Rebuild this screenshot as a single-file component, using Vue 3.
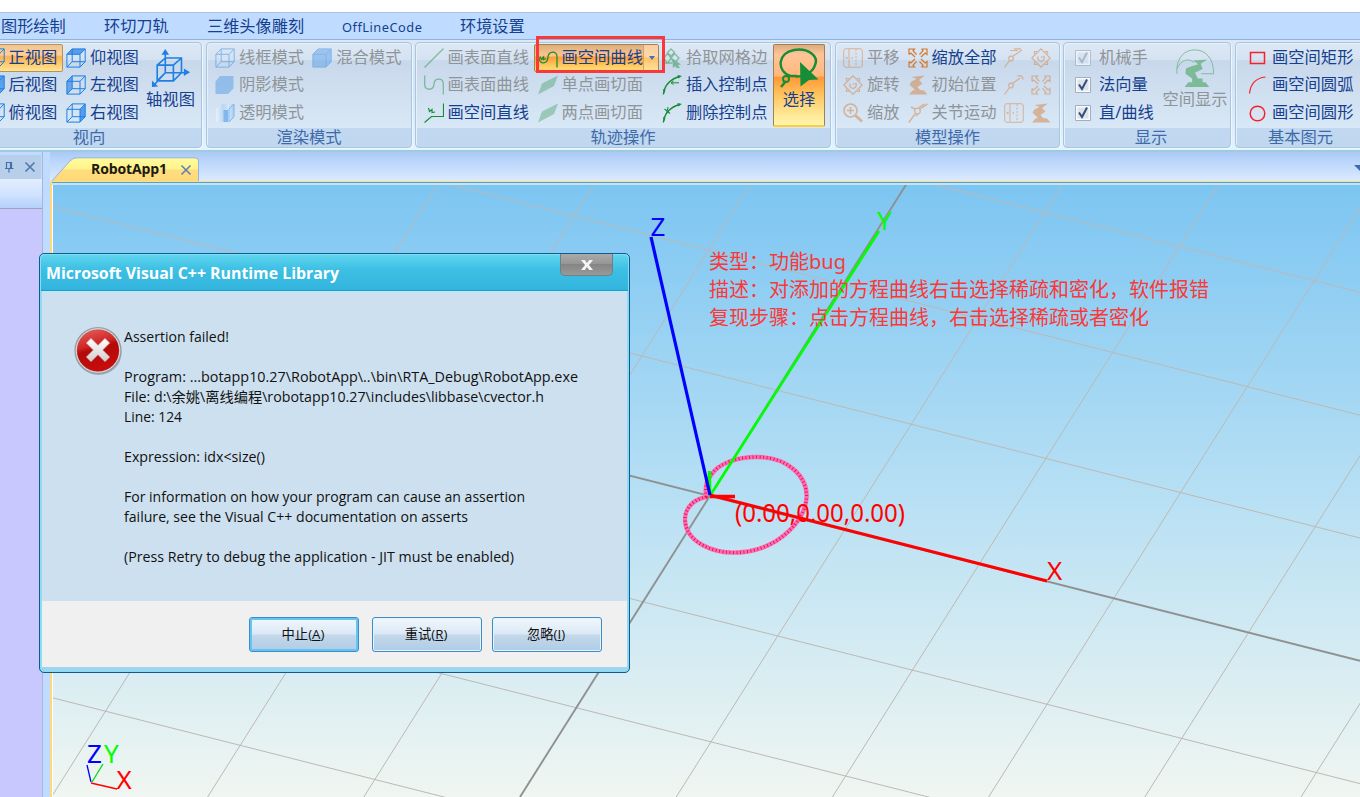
<script setup>
const tabs = [
  { label: '图形绘制', w: 103 },
  { label: '环切刀轨', w: 103 },
  { label: '三维头像雕刻', w: 135 },
  { label: 'OffLineCode', w: 118, latin: true },
  { label: '环境设置', w: 80 }
]

const groups = [
  {
    name: '视向', cls: 'g-view',
    cols: [
      { w: 81.5, items: [
        { t: '正视图', i: 'cube', c: 'blue', hot: true },
        { t: '后视图', i: 'cube-front', c: 'blue' },
        { t: '俯视图', i: 'cube', c: 'blue' }
      ] },
      { w: 78, items: [
        { t: '仰视图', i: 'cube-top', c: 'blue' },
        { t: '左视图', i: 'cube-left', c: 'blue' },
        { t: '右视图', i: 'cube-right', c: 'blue' }
      ] }
    ],
    big: { t: '轴视图', i: 'axes', c: 'blue', cls: 'big-axes' }
  },
  {
    name: '渲染模式', cls: 'g-render',
    cols: [
      { w: 97.3, items: [
        { t: '线框模式', i: 'cube', c: 'blue', off: true },
        { t: '阴影模式', i: 'cube-shade', c: 'blue', off: true },
        { t: '透明模式', i: 'cube-glass', c: 'blue', off: true }
      ] },
      { w: 90, items: [{ t: '混合模式', i: 'cube-solid', c: 'blue', off: true }] }
    ]
  },
  {
    name: '轨迹操作', cls: 'g-track',
    cols: [
      { w: 114, items: [
        { t: '画表面直线', i: 'line', c: 'green', off: true },
        { t: '画表面曲线', i: 'curve', c: 'green', off: true },
        { t: '画空间直线', i: 'space-line', c: 'green' }
      ] },
      { w: 124.5, items: [
        { t: '画空间曲线', i: 'space-curve', c: 'green', split: true },
        { t: '单点画切面', i: 'plane', c: 'green', off: true },
        { t: '两点画切面', i: 'plane', c: 'green', off: true }
      ] },
      { w: 111, items: [
        { t: '拾取网格边', i: 'mesh', c: 'green', off: true },
        { t: '插入控制点', i: 'arc-in', c: 'green' },
        { t: '删除控制点', i: 'arc-del', c: 'green' }
      ] }
    ],
    big: { t: '选择', i: 'lasso', c: 'green', cls: 'big-select' }
  },
  {
    name: '模型操作', cls: 'g-model',
    cols: [
      { w: 64.5, items: [
        { t: '平移', i: 'pan', c: 'orange', off: true },
        { t: '旋转', i: 'rotate', c: 'orange', off: true },
        { t: '缩放', i: 'zoom', c: 'orange', off: true }
      ] },
      { w: 96.5, items: [
        { t: '缩放全部', i: 'expand', c: 'orange' },
        { t: '初始位置', i: 'robot', c: 'orange', off: true },
        { t: '关节运动', i: 'joint', c: 'orange', off: true }
      ] },
      { w: 27, items: [
        { t: '', i: 'joint-z', c: 'orange', off: true },
        { t: '', i: 'joint-r', c: 'orange', off: true },
        { t: '', i: 'pan', c: 'orange', off: true }
      ] },
      { w: 24, items: [
        { t: '', i: 'rotate', c: 'orange', off: true },
        { t: '', i: 'expand', c: 'orange', off: true },
        { t: '', i: 'robot', c: 'orange', off: true }
      ] }
    ]
  },
  {
    name: '显示', cls: 'g-show',
    cols: [
      { w: 85, items: [
        { t: '机械手', i: 'check', c: 'check', off: true },
        { t: '法向量', i: 'check', c: 'check' },
        { t: '直/曲线', i: 'check', c: 'check' }
      ] }
    ],
    big: { t: '空间显示', i: 'space', c: 'green', cls: 'big-space', off: true }
  },
  {
    name: '基本图元', cls: 'g-prim',
    cols: [
      { w: 112, items: [
        { t: '画空间矩形', i: 'rect', c: 'red' },
        { t: '画空间圆弧', i: 'arc', c: 'red' },
        { t: '画空间圆形', i: 'circle', c: 'red' }
      ] }
    ]
  }
]

const steep = [-3, -2, -1, 1, 2, 3, 4, 5, 6, 7, 8, 9].map(k => ({
  x1: 520 + 156.2 * k, y1: 797, x2: 906.5 + 156.2 * k, y2: 184
}))
const shallow = [-3, -2, -1, 1, 2, 3].map(k => ({
  x1: 40, y1: 326.2 + 122.8 * k, x2: 1360, y2: 660.8 + 122.8 * k
}))

const message = [
  { t: 'Assertion failed!', w: 105 },
  { t: '' },
  { t: 'Program: ...botapp10.27\\RobotApp\\..\\bin\\RTA_Debug\\RobotApp.exe', w: 454 },
  { t: 'File: d:\\余姚\\离线编程\\robotapp10.27\\includes\\libbase\\cvector.h', w: 420 },
  { t: 'Line: 124', w: 58 },
  { t: '' },
  { t: 'Expression: idx<size()', w: 141 },
  { t: '' },
  { t: 'For information on how your program can cause an assertion', w: 401 },
  { t: 'failure, see the Visual C++ documentation on asserts', w: 344 },
  { t: '' },
  { t: '(Press Retry to debug the application - JIT must be enabled)', w: 390 }
]
const buttons = [
  { t: '中止', k: 'A', focus: true },
  { t: '重试', k: 'R' },
  { t: '忽略', k: 'I' }
]
</script>

<template>
  <div class="app">
    <svg class="defs" width="0" height="0">
      <defs>
        <linearGradient id="glass" x1="0" x2="1"><stop offset="0" stop-color="#fff" /><stop offset=".4" stop-color="#9cc8f8" /><stop offset=".7" stop-color="#d8eaff" /><stop offset="1" stop-color="#6eb0f4" /></linearGradient>
      </defs>
      <symbol id="cube" viewBox="0 0 20 20"><path d="M.9 6.3H14v12.8H.9zM6.2.9H19.2V13.7H6.2zM.9 6.3 6.2.9M14 6.3 19.2.9M14 19.1l5.2-5.4M.9 19.1l5.3-5.4" fill="none" stroke="currentColor" stroke-width="1" /></symbol>
      <symbol id="cube-front" viewBox="0 0 20 20"><path d="M6.2.9H19.2V13.7L14 19.1V6.3H1z" fill="currentColor" opacity=".65" /><use href="#cube" width="20" height="20" /></symbol>
      <symbol id="cube-top" viewBox="0 0 20 20"><path d="M.9 6.3 6.2.9h13L14 6.3z" fill="currentColor" opacity=".7" /><use href="#cube" width="20" height="20" /></symbol>
      <symbol id="cube-left" viewBox="0 0 20 20"><path d="M.9 6.3 6.2.9v12.8L.9 19.1z" fill="currentColor" opacity=".6" /><use href="#cube" width="20" height="20" /></symbol>
      <symbol id="cube-right" viewBox="0 0 20 20"><path d="M14 6.3 19.2.9v12.8L14 19.1z" fill="currentColor" opacity=".7" /><use href="#cube" width="20" height="20" /></symbol>
      <symbol id="cube-shade" viewBox="0 0 20 20"><path d="M.5 6.5 5 1h13.500v12.500L13 19H.5z" fill="currentColor" opacity=".75" /></symbol>
      <symbol id="cube-solid" viewBox="0 0 20 20"><path d="M.9 6.3 6.2.9h13v12.8L14 19.1H.9z" fill="currentColor" opacity=".7" /><path d="M.9 6.300H14v12.800H.9zM.9 6.300 6.200.9h13v12.800L14 19.100M14 6.300 19.200.9" fill="none" stroke="currentColor" /></symbol>
      <symbol id="cube-glass" viewBox="0 0 20 20"><path d="M1 6 6 1h13v13l-5 5H1z" fill="url(#glass)" /><path d="M14 6l5-5v13l-5 5z" fill="none" stroke="currentColor" /><path d="M8.500 7h4.500v12H8.500z" fill="currentColor" /></symbol>
      <symbol id="axes" viewBox="0 0 40 42"><path d="M5.500 18H22.500V34.500H5.500zM14 10.500h17V26H14zM5.500 18 14 10.500M22.500 18 31 10.500M22.500 34.500 31 26M5.500 34.500 14 26M14 26V4M14 26h21M14 26 3 38" fill="none" stroke="currentColor" stroke-width="1.700" /><path d="M14 1l4 6H10zM40 25.500l-6.500-4v8zM0 41v-7l6.500 6.500z" fill="currentColor" /></symbol>
      <symbol id="line" viewBox="0 0 20 20"><path d="M.5 19.500 19.500.5" stroke="currentColor" stroke-width="1.300" /></symbol>
      <symbol id="curve" viewBox="0 0 20 20"><path d="M.7.5V9c0 7 8.800 7 9.300 0C10.500 2.500 19.300 2.500 19.300 9v10.500" fill="none" stroke="currentColor" stroke-width="1.300" /></symbol>
      <symbol id="space-line" viewBox="0 0 20 20"><path d="M.5 19.500 7.500 13.500h12V.5M4.500 5l1 3.500L8 6.500v3l3-.5" fill="none" stroke="currentColor" stroke-width="1.200" /></symbol>
      <symbol id="space-curve" viewBox="0 0 20 20"><path d="M1 9.500c0 7 8.500 7.500 9-.5C10.500 2.500 19 2.500 19 8.500v11M2 8.500l1.500 3L5.500 9v2.500L8 10.500" fill="none" stroke="currentColor" stroke-width="1.300" /></symbol>
      <symbol id="plane" viewBox="0 0 20 20"><path d="M0 19.500 4 8.500 20 .5 16 11z" fill="currentColor" opacity=".7" /></symbol>
      <symbol id="mesh" viewBox="0 0 20 20"><path d="M9 1 5.500 4.500 9 8l3.500-3.500zM5.500 5.500 2 10l3.500 5L9 10zM12.500 5.500 9 10l3.500 5L17 10zM2 10.500 1 15h9" fill="none" stroke="currentColor" stroke-width="1.300" /><path d="m10 10 9 6.500-3 .5 2 3-3 1-1.500-3L11 20z" fill="currentColor" /></symbol>
      <symbol id="arc-in" viewBox="0 0 20 20"><path d="M1.300 19.500C2.500 10.500 8 4 18 1.500" fill="none" stroke="currentColor" stroke-width="1.300" /><path d="M9 7.800h8M9 7.800l2.500-1.800M9 7.800l2.500 1.800" fill="none" stroke="currentColor" stroke-width="1" /><path d="M15.500 0l4.500 1-4 2.500zM1 14l2.500 1-1.500 4z" fill="currentColor" /></symbol>
      <symbol id="arc-del" viewBox="0 0 20 20"><path d="M1.300 19.500C2.500 10.500 8 4 18 1.500" fill="none" stroke="currentColor" stroke-width="1.300" /><path d="M2.500 6l5.500 4.500M6 4l-1.500 7" fill="none" stroke="currentColor" stroke-width="1.100" /><path d="M15.500 0l4.500 1-4 2.500zM1 14l2.500 1-1.500 4z" fill="currentColor" /></symbol>
      <symbol id="lasso" viewBox="0 0 40 40"><path d="M11 28C-3 22-1 5 15 2c14-2.500 25 6 21 15-2 7-10 12-19 11.500" fill="none" stroke="currentColor" stroke-width="2.500" /><circle cx="7" cy="31" r="3" fill="none" stroke="currentColor" stroke-width="2" /><path d="M9 28h9M7 33l-5 6" stroke="currentColor" stroke-width="2.500" /><path d="M21 14 39.500 31.500 30 32l-8.500 6.500z" fill="currentColor" /></symbol>
      <symbol id="pan" viewBox="0 0 20 20"><path d="M3 .7h14q2.300 0 2.300 2.300v14q0 2.300-2.300 2.300H3Q.7 19.300.7 17V3Q.7.7 3 .7zM6 1v18" fill="none" stroke="currentColor" stroke-width="1" /><path d="M13 1v18" stroke="currentColor" stroke-dasharray="2 1.500" /><path d="M2 10l2.500-1.500v3zM8.500 9.300h1.500v1.500H8.500z" fill="currentColor" /></symbol>
      <symbol id="rotate" viewBox="0 0 20 20"><path d="M10 .8 19.200 10 10 19.200.8 10zM3.500 6V3.500H6M14 3.500h2.500V6M16.500 14v2.500H14M6 16.500H3.500V14" fill="none" stroke="currentColor" stroke-width="1.200" /><path d="M7.200 8.500A3.200 3.200 0 1 0 12.500 8M10 9.500l1.500-1" fill="none" stroke="currentColor" stroke-width="1.200" /></symbol>
      <symbol id="zoom" viewBox="0 0 20 20"><circle cx="7.500" cy="7.500" r="6.500" fill="none" stroke="currentColor" stroke-width="1.600" /><path d="M4 7.500h7M7.500 4v7" stroke="currentColor" stroke-width="1.600" /><path d="m12.500 12.500 6.500 6" stroke="currentColor" stroke-width="3" /></symbol>
      <symbol id="expand" viewBox="0 0 20 20"><path d="M1 6.500V1h5.500L5 2.800 8.500 6.500M1 6.500 2.800 5 7 9M13.500 1H19v5.500L17.200 5 13 9M13.500 1 15 2.800 11.500 6.500M1 13.500V19h5.500L5 17.200l3.500-3.700M1 13.500 2.800 15 7 11M13.500 19H19v-5.500L17.200 15 13 11M13.500 19l1.500-1.800-3.500-3.700" fill="none" stroke="currentColor" stroke-width="1.200" /></symbol>
      <symbol id="robot" viewBox="0 0 20 20"><path d="M3.500 2 17 .5 11 5 14.500 8.500 9.500 12l2.500 3 4 .5 3.500 4H1L4.500 15.500 7 15 1.500 9.500 3.500 6.500 8.500 4z" fill="currentColor" /></symbol>
      <symbol id="joint" viewBox="0 0 20 20"><circle cx="9.500" cy="8" r="2.800" fill="none" stroke="currentColor" stroke-width="1.200" /><path d="M12 6 19.500.8M11 4.500 16.500.8M7.500 10.500.8 19.500M10 11l-2 2M7 6 3 4" stroke="currentColor" stroke-width="1.400" /></symbol>
      <symbol id="joint-z" viewBox="0 0 20 20"><circle cx="7" cy="10.500" r="2.300" fill="none" stroke="currentColor" stroke-width="1.200" /><path d="M8.500 8.500 18 2M5.500 12.500.5 19.500M6 2.500h8M10 .8h7" fill="none" stroke="currentColor" stroke-width="1.200" /></symbol>
      <symbol id="joint-r" viewBox="0 0 20 20"><circle cx="7" cy="10.500" r="2.300" fill="none" stroke="currentColor" stroke-width="1.200" /><path d="M8.500 8.500 16 3M5.500 12.500.5 19.500M13.500 1c3-1 5.500 0 5.500 3.500" fill="none" stroke="currentColor" stroke-width="1.200" /></symbol>
      <symbol id="check" viewBox="0 0 20 20"><path d="M2.500 2.500h15v15h-15z" fill="#f8fafc" stroke="#9fb0c4" stroke-width="1" /><path d="M4.500 4.500h11v11h-11z" fill="#dce3ec" /><path d="M6 9.500 9 14l5-9.500" fill="none" stroke="currentColor" stroke-width="2" /></symbol>
      <symbol id="space" viewBox="0 0 40 42"><path d="M1 27C0 10 9 2 20 2s20 9 19.500 25H26.500M1 22c4-9 11-12 18-7" fill="none" stroke="currentColor" stroke-width="1" /><path d="M18 13 33 12l-7 4.500 2 5.500-8 4 3 6h5v4h3l4 5H9l4-5h4v-4l-7-5 .5-5.500 5-2 8-2.500z" fill="currentColor" /></symbol>
      <symbol id="rect" viewBox="0 0 20 20"><path d="M2.500 4.500h14v11h-14z" fill="none" stroke="currentColor" stroke-width="1.500" /></symbol>
      <symbol id="arc" viewBox="0 0 20 20"><path d="M1.500 18.500C2.500 9 8 3 17.500 2" fill="none" stroke="currentColor" stroke-width="1.200" /></symbol>
      <symbol id="circle" viewBox="0 0 20 20"><circle cx="9.500" cy="10.500" r="7.300" fill="none" stroke="currentColor" stroke-width="1.500" /></symbol>
    </svg>

    <nav class="tabs">
      <span v-for="t in tabs" :key="t.label" :class="{ latin: t.latin }" :style="{ width: t.w + 'px' }">{{ t.label }}</span>
    </nav>

    <section class="ribbon">
      <div v-for="g in groups" :key="g.name" class="group" :class="g.cls">
        <div class="content">
          <div v-for="(c, ci) in g.cols" :key="ci" class="col" :style="{ width: c.w + 'px' }">
            <div v-for="(it, ii) in c.items" :key="ii" class="item" :class="{ off: it.off, hot: it.hot, split: it.split }">
              <svg class="ico" :class="it.c"><use :href="'#' + it.i" /></svg>
              <span>{{ it.t }}</span>
              <i v-if="it.split" class="drop"></i>
            </div>
          </div>
          <div v-if="g.big" class="big" :class="[g.big.cls, { off: g.big.off }]">
            <svg class="bigico" :class="g.big.c"><use :href="'#' + g.big.i" /></svg>
            <span>{{ g.big.t }}</span>
          </div>
        </div>
        <div class="caption">{{ g.name }}</div>
      </div>
    </section>
    <div class="callout"></div>

    <main class="work">
      <aside class="side">
        <header>
          <svg width="40" height="14" viewBox="0 0 40 14"><path d="M6.500 8V2.500h5V8M10.500 2.500V8M5 8.500h8.500M9 8.500v4" fill="none" stroke="#4a6ea9" stroke-width="1.200" /><path d="m25.500 2.500 9 9m0-9-9 9" stroke="#5177b0" stroke-width="1.600" /></svg>
        </header>
        <div class="side-tool"></div>
        <div class="side-body"></div>
      </aside>
      <div class="doc">
        <div class="doctabs">
          <div class="doctab">
            <svg class="tabshape" width="150" height="25" viewBox="0 0 150 25">
              <defs><linearGradient id="tabg" x1="0" y1="0" x2="0" y2="1"><stop offset="0" stop-color="#fffba0" /><stop offset=".45" stop-color="#fff48a" /><stop offset=".5" stop-color="#ffdd80" /><stop offset="1" stop-color="#ffd877" /></linearGradient></defs>
              <path d="M1 25 20 4Q23 .8 27 .8H145Q148.500.8 148.500 4V25z" fill="url(#tabg)" stroke="#93b4dc" />
            </svg>
            <b>RobotApp1</b>
            <svg class="tabx" width="12" height="12" viewBox="0 0 12 12"><path d="m1.500 1.500 9 9m0-9-9 9" stroke="#5b7db3" stroke-width="1.500" /></svg>
          </div>
          <i class="tabmenu"></i>
        </div>
        <div class="view">
          <svg class="scene" viewBox="53 185 1307 612" preserveAspectRatio="none">
            <g stroke="#bdb8b4" stroke-width="1" fill="none">
              <line v-for="(l, i) in steep" :key="'s' + i" v-bind="l" />
              <line v-for="(l, i) in shallow" :key="'h' + i" v-bind="l" />
            </g>
            <g stroke="#8f9190" stroke-width="1.900">
              <line x1="40" y1="326.200" x2="1360" y2="660.800" />
              <line x1="520" y1="797" x2="906.500" y2="184" />
            </g>
            <g fill="none">
              <path d="M706 497C705 489 706 481 711 475C719 463 737 457 757 457C787 457 808 476 806.500 498C805 520 781 546 748 551.500C713 557 685 541 685 519C685 508 694 499 706 497z" stroke="#ff69b4" stroke-width="4.400" />
              <path d="M706 497C705 489 706 481 711 475C719 463 737 457 757 457C787 457 808 476 806.500 498C805 520 781 546 748 551.500C713 557 685 541 685 519C685 508 694 499 706 497z" stroke="#e01840" stroke-width="3.200" stroke-dasharray=".9 2.600" />
              <path d="M710.500 495 879 231" stroke="#0f0" stroke-width="2.700" />
              <path d="M709.500 471V492" stroke="#0f0" stroke-width="3.500" />
              <path d="M710 495 1047 581" stroke="#f00" stroke-width="3" />
              <path d="M710 496.500h25" stroke="#f00" stroke-width="3.500" />
              <path d="M651 237 710 495" stroke="#00f" stroke-width="3.200" />
            </g>
            <g class="axis">
              <text x="650.500" y="236" fill="#00f">Z</text>
              <text x="877" y="230" fill="#0f0">Y</text>
              <text x="1047" y="580" fill="#f00">X</text>
              <text x="735" y="521.500" fill="#f00" textLength="170" lengthAdjust="spacingAndGlyphs">(0.00,0.00,0.00)</text>
            </g>
            <g fill="none" stroke-width="1.300">
              <path d="M91 782 87 765" stroke="#00f" /><path d="m92 782 11-18" stroke="#0d0" /><path d="m91 783 26 6" stroke="#f00" />
            </g>
            <g class="mini">
              <text x="87" y="763" fill="#00f">Z</text>
              <text x="104" y="763" fill="#0f0">Y</text>
              <text x="116.500" y="789" fill="#f00">X</text>
            </g>
          </svg>
          <div class="note">
            <p>类型：功能bug</p>
            <p>描述：对添加的方程曲线右击选择稀疏和密化，软件报错</p>
            <p>复现步骤：点击方程曲线，右击选择稀疏或者密化</p>
          </div>
        </div>
      </div>
    </main>

    <div class="dialog">
      <div class="title">
        <svg width="300" height="24"><text x="0" y="17" textLength="293" lengthAdjust="spacingAndGlyphs">Microsoft Visual C++ Runtime Library</text></svg>
        <button class="close"><svg width="12" height="10" viewBox="0 0 12 10"><path d="M0 0h3.800L6 3 8.200 0H12L8 5l4 5H8.200L6 7l-2.200 3H0l4-5z" fill="#f4f4f4" /></svg></button>
      </div>
      <div class="body">
        <svg class="err" width="48" height="50" viewBox="0 0 48 50">
          <defs>
            <linearGradient id="errg" x1="0" y1="0" x2=".3" y2="1"><stop offset="0" stop-color="#ea6a62" /><stop offset=".45" stop-color="#cf2525" /><stop offset=".55" stop-color="#b30a0a" /><stop offset="1" stop-color="#c80c0c" /></linearGradient>
            <linearGradient id="xg" x1="0" y1="0" x2="0" y2="1"><stop offset="0" stop-color="#fff" /><stop offset="1" stop-color="#cfcfcf" /></linearGradient>
          </defs>
          <ellipse cx="24.500" cy="27" rx="23" ry="22" fill="#55677a" opacity=".4" />
          <circle cx="24" cy="24.500" r="22.300" fill="url(#errg)" stroke="#9b9da3" stroke-width="2.600" />
          <circle cx="24" cy="24.500" r="21.800" fill="none" stroke="#e3d9da" stroke-width="1" />
          <path d="m12.500 17 4.500-4.500 7 7 7-7 4.500 4.500-7 7 7 7-4.500 4.500-7-7-7 7-4.500-4.500 7-7z" fill="url(#xg)" stroke="#d9d2d2" stroke-width=".8" />
        </svg>
        <div class="msg">
          <div v-for="(m, i) in message" :key="i" class="ml">
            <svg v-if="m.t" width="470" height="20"><text x="0" y="14.500" :textLength="m.w" lengthAdjust="spacingAndGlyphs">{{ m.t }}</text></svg>
          </div>
        </div>
      </div>
      <div class="foot">
        <button v-for="b in buttons" :key="b.k" class="btn" :class="{ focus: b.focus }">{{ b.t }}(<u>{{ b.k }}</u>)</button>
      </div>
    </div>
  </div>
</template>

<style>
html, body { margin: 0; overflow: hidden; }
</style>

<style scoped>
.app { position: relative; box-sizing: border-box; width: 1360px; height: 797px; padding-top: 12px; overflow: hidden; background: #fff; display: flex; flex-direction: column; font-family: "Noto Sans", "Noto Sans CJK SC", sans-serif; color: #153f8f; }
.defs { position: absolute; }
.tabs { flex: none; display: flex; height: 27px; background: #bfdbff; border-top: 1px solid #a3c2ec; box-sizing: border-box; padding-left: 1px; font-size: 16.200px; line-height: 26px; white-space: nowrap; }
.tabs span { flex: none; }
.tabs .latin { font-size: 12.800px; letter-spacing: .5px; line-height: 28px; }
.ribbon { flex: none; box-sizing: border-box; height: 113px; display: flex; gap: 3px; padding: 2px 0 0; background: linear-gradient(#dce8f5 0, #d4e4f4 40%, #e3f2ff 100%); border-top: 1px solid #8fb2de; border-bottom: 2px solid #9dcbe4; }
.group { flex: none; box-sizing: border-box; height: 106px; border: 1px solid #a9c5df; border-radius: 4px; box-shadow: inset 1px 1px 0 #e6f0fa, 1px 1px 0 #eef6fe; background: linear-gradient(#dde8f5 0, #d5e2f1 16%, #c8d8eb 17%, #d9e8f6 82%, #c1d8f0 82%, #bfd7ef 100%); overflow: hidden; }
.content { display: flex; height: 85px; padding-top: 1px; box-sizing: border-box; }
.caption { height: 19px; line-height: 18px; text-align: center; font-size: 16.300px; color: #3e6aaa; }
.g-view { width: 223px; margin-left: -21px; }
.g-view .content { padding-left: 4.500px; }
.g-view .caption { margin-left: -3px; }
.g-render { width: 206px; margin-left: 1px; }
.g-render .content { padding-left: 8px; }
.g-track { width: 416px; }
.g-track .content { padding-left: 7.500px; }
.g-model { width: 225px; margin-left: 1px; }
.g-model .content { padding-left: 7px; }
.g-show { width: 168px; }
.g-show .content { padding-left: 9px; }
.g-show .caption { margin-left: 8px; }
.g-prim { width: 142px; margin-left: 1px; }
.g-prim .content { padding-left: 12px; }
.g-prim .caption { margin-left: -11px; }
.col { flex: none; }
.item { display: flex; align-items: center; height: 27.500px; font-size: 16.300px; line-height: 27px; white-space: nowrap; box-sizing: border-box; }
.item span { margin-left: 4px; position: relative; top: -.5px; }
.ico { flex: none; width: 20px; height: 20px; }
.g-show .item span { margin-left: 6px; }
.blue { color: #1f7fe5; }
.green { color: #178d38; }
.orange { color: #d5772c; }
.red { color: #f8202c; }
.check { color: #354f78; }
.off { color: #8f9499; }
.off .ico { opacity: .45; }
.off .check { opacity: .7; color: #8fa9c4; }
.hot { margin-left: -3px; width: 81px; padding-left: 3px; border: 1px solid #b09468; border-left: 0; border-radius: 2px; background: linear-gradient(#efc58f, #ffd09b 38%, #fdb150 45%, #ffe48f); }
.split { margin-left: -4px; width: 125px; padding-left: 3px; border: 1px solid #a5814d; border-radius: 2px; background: linear-gradient(#dcae7c, #fdc58d 40%, #ff9f38 48%, #ffd76d 90%); }
.drop { align-self: stretch; border-left: 1px solid #d4a469; display: flex; align-items: center; padding-left: 5px; background: linear-gradient(#f5cfa0, #ffd9a8 45%, #ffc168 50%, #ffe59a); flex: 1; }
.drop::after { content: ''; border: 3.500px solid transparent; border-top: 4.500px solid #3e72bb; border-bottom: 0; }
.big { flex: none; display: flex; flex-direction: column; align-items: center; font-size: 16.300px; line-height: 22px; white-space: nowrap; box-sizing: border-box; }
.bigico { width: 40px; height: 40px; }
.big-axes { width: 53px; padding-top: 4px; }
.big-select { width: 52px; height: 83px; padding-top: 3px; border: 1px solid #a3804a; border-bottom: 2px solid #ffcd37; background: linear-gradient(#d9ad82 0, #ffc597 12%, #ffb77c 39%, #ff9635 40%, #ffc45d 62%, #ffec9d 90%, #fff3ac); border-radius: 2px; }
.big-space { width: 74px; padding-top: 4px; }
.big-space .green { color: #7dbb98; }
.callout { position: absolute; left: 536px; top: 36px; width: 129px; height: 37px; box-sizing: border-box; border: 3px solid #fb3838; }

.work { flex: 1; display: flex; background: #bfdbff; min-height: 0; }
.side { flex: none; width: 43px; box-sizing: border-box; border-right: 1px solid #a9b7cf; display: flex; flex-direction: column; padding-top: 3px; }
.side header { height: 24px; width: 41px; background: #b7cfe8; display: flex; align-items: center; }
.side-tool { height: 29px; background: linear-gradient(#e2edff, #cfe2ff 55%, #b4d1fb); border-bottom: 1px solid #9aa5bd; }
.side-body { flex: 1; background: #c8c8ff; }
.doc { flex: 1; margin-left: 7px; display: flex; flex-direction: column; min-width: 0; }
.doctabs { flex: none; height: 29px; background: linear-gradient(#abc9f3, #bad5fb 30%, #dceaff); display: flex; justify-content: space-between; align-items: flex-end; }
.doctab { position: relative; width: 150px; height: 24px; display: flex; align-items: center; }
.tabshape { position: absolute; left: 0; top: 0; }
.doctab b { position: relative; top: -.5px; font: bold 14px/22px "Open Sans", sans-serif; color: #1a1a10; margin-left: 41px; width: 89px; flex: none; letter-spacing: -.1px; }
.tabx { position: relative; top: 1px; }
.tabmenu { align-self: center; position: relative; top: 1px; margin-right: -6px; border: 6px solid transparent; border-top-color: #3f6aae; border-bottom: 0; }
.view { position: relative; flex: 1; min-height: 0; border-left: 2px solid #ffd978; border-top: 1px solid #efe39a; background: linear-gradient(#7cc5f2, #b6dff4 50%, #f0f6f1); box-shadow: inset 0 1px 0 #5f9dc0, inset 0 3px 0 #c4e3f3, inset 1px 0 0 #fff; }
.scene { display: block; width: 1307px; height: 612px; margin: 3px 0 0 1px; }
.axis { font: 26px "Noto Sans", sans-serif; }
.mini { font: 26px "Noto Sans", sans-serif; }
.note { position: absolute; left: 657px; top: 66px; color: #fb3838; font-size: 20px; line-height: 28px; white-space: nowrap; }
.note p { margin: 0; }

.dialog { position: absolute; left: 39px; top: 253px; width: 591px; height: 420px; box-sizing: border-box; border: 1px solid #11598e; border-radius: 5px; background: #9fd5ee; box-shadow: inset 0 0 0 1px #7fe0f5; display: flex; flex-direction: column; padding: 1px 2px 5px; }
.title { flex: none; height: 36px; margin: 0 -1px; border-bottom: 1px solid #1e9ccb; box-sizing: border-box; border-radius: 4px 4px 0 0; background: linear-gradient(#5fd5ee, #3ec0e4 40%, #32b4de); display: flex; justify-content: space-between; padding: 0 15px 0 4.500px; }
.title svg text { font: bold 15.500px "Open Sans", sans-serif; fill: #fff; }
.title > svg { margin-top: 7px; }
.close { width: 53px; height: 22px; margin-top: -1px; border: 1px solid #6e7f86; border-top: 0; border-radius: 0 0 5px 5px; background: linear-gradient(#aaa, #979797 45%, #858585 50%, #999); display: flex; align-items: center; justify-content: center; padding: 0; }
.body { flex: 1; background: #cde0ef; border-top: 1px solid #b3ecfa; display: flex; position: relative; }
.err { margin: 34px 0 0 31.500px; flex: none; }
.msg { margin: 34.500px 0 0 2.500px; }
.ml { height: 20px; }
.ml svg { display: block; }
.ml text { font: 14px "Open Sans", "Noto Sans CJK SC", sans-serif; fill: #111; }
.foot { flex: none; height: 66px; box-sizing: border-box; background: #f0f0f0; display: flex; justify-content: flex-end; padding: 16px 25px 0 0; gap: 10px; }
.btn { width: 110px; height: 35px; border: 1px solid #3c8dc5; border-radius: 3px; background: linear-gradient(#f1f7fc, #dbe9f5 48%, #c3d8ea 52%, #b0cce5); box-shadow: inset 0 0 0 1px #e6f3fc; font: 13.300px "Open Sans", "Noto Sans CJK SC", sans-serif; color: #111; padding: 0 2px 2px 0; }
.btn.focus { box-shadow: inset 0 0 0 2px #63c5f2; margin-right: 3px; }
</style>
